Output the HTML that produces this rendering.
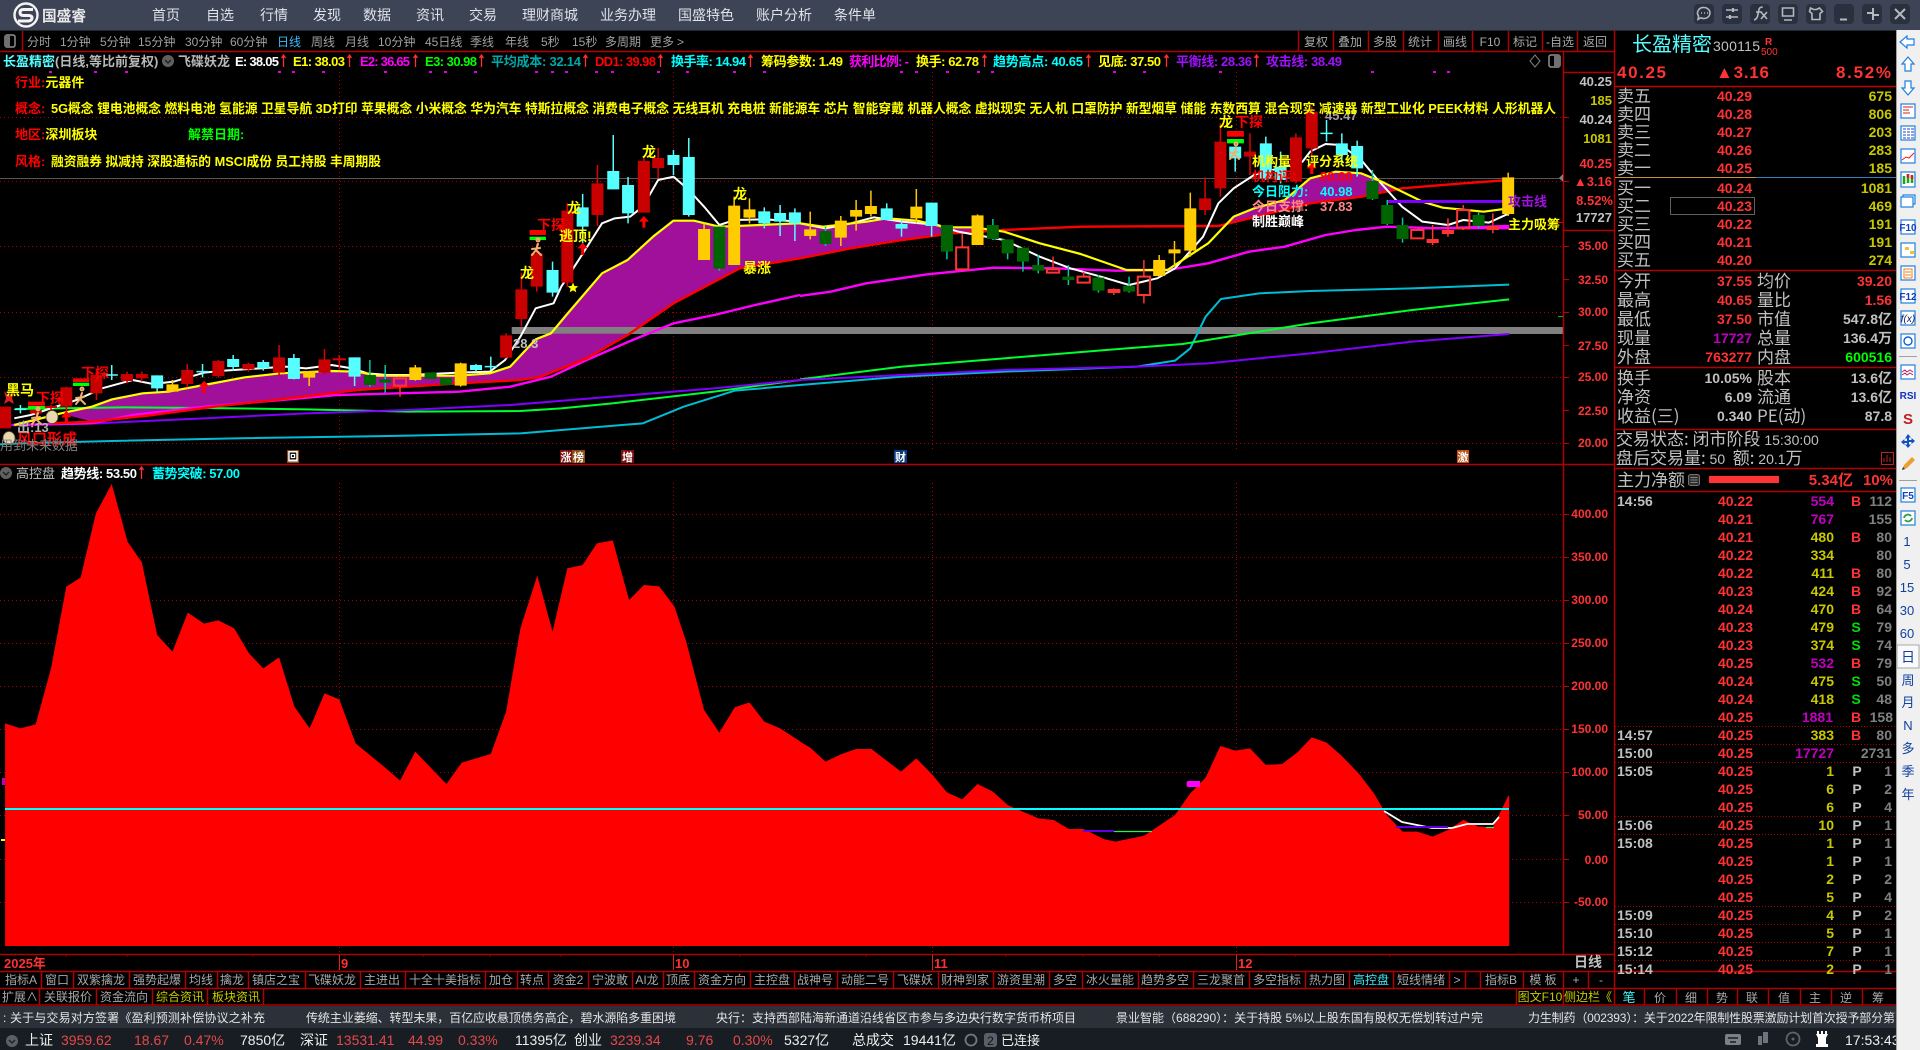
<!DOCTYPE html>
<html lang="zh-CN">
<head>
<meta charset="utf-8">
<title>长盈精密</title>
<style>
html,body{margin:0;padding:0;background:#000;width:1920px;height:1050px;overflow:hidden}
svg{display:block;position:absolute;left:0;top:0}
text{font-family:"Liberation Sans","WenQuanYi Zen Hei","Noto Sans CJK SC",sans-serif;white-space:pre}
.b text,text.b{font-family:"Liberation Sans","Noto Sans CJK SC",sans-serif;font-weight:bold}
.ns{vector-effect:non-scaling-stroke;fill:none}
.ns path,.ns rect,.ns polyline{vector-effect:non-scaling-stroke}
.dot{stroke:#a80000;stroke-width:1;stroke-dasharray:1 3;fill:none}
.ln{stroke:#b00000;stroke-width:1.5;fill:none}
.tb text{font-size:12px;fill:#a8a8a8;text-anchor:middle}
.ax text{font-size:12px;font-weight:bold;fill:#ff3333;text-anchor:end}
.lb text{font-size:17px;fill:#c0c0c0;font-family:"Noto Sans CJK SC",sans-serif}
.rv text{font-size:14px;text-anchor:end;font-weight:bold}
.tk text{font-size:14px;font-weight:bold}
.yl{fill:#c8c800}.rd{fill:#ff3333}.gy{fill:#c0c0c0}.mg{fill:#c000c0}.dg{fill:#808080}.gn{fill:#00e000}
.sd text{font-size:13px;fill:#1040a0;text-anchor:middle}
</style>
</head>
<body>
<svg xmlns="http://www.w3.org/2000/svg" width="1920" height="1050" viewBox="0 0 1920 1050">
<rect width="1920" height="1050" fill="#000"/>

<!-- title bar -->
<rect width="1920" height="30" fill="#3d4456"/>
<circle cx="26" cy="15" r="11.500" fill="none" stroke="#f4f4f4" stroke-width="2.400"/>
<path d="M33 9.500H23.500Q20 9.500 20 12.500T23.500 15.500H28.500Q32 15.500 32 18T28.500 21H18" fill="none" stroke="#f4f4f4" stroke-width="3"/>
<text x="42" y="21" font-size="15" font-weight="bold" fill="#e8e8e8" textLength="44" lengthAdjust="spacingAndGlyphs" font-family="Noto Sans CJK SC">国盛睿</text>
<g font-size="14" fill="#dfe3ea">
<text x="152" y="20">首页</text><text x="206" y="20">自选</text><text x="260" y="20">行情</text><text x="313" y="20">发现</text><text x="363" y="20">数据</text><text x="416" y="20">资讯</text><text x="469" y="20">交易</text><text x="522" y="20">理财商城</text><text x="600" y="20">业务办理</text><text x="678" y="20">国盛特色</text><text x="756" y="20">账户分析</text><text x="834" y="20">条件单</text>
</g>
<!-- window buttons -->
<g fill="#2a303d">
<rect x="1694" y="4" width="20" height="20" rx="4"/><rect x="1722" y="4" width="20" height="20" rx="4"/><rect x="1750" y="4" width="20" height="20" rx="4"/><rect x="1778" y="4" width="20" height="20" rx="4"/><rect x="1806" y="4" width="20" height="20" rx="4"/><rect x="1834" y="4" width="20" height="20" rx="4"/><rect x="1862" y="4" width="20" height="20" rx="4"/><rect x="1890" y="4" width="20" height="20" rx="4"/>
</g>
<g fill="none" stroke="#b4b8c0" stroke-width="1.600">
<path d="M1704 7.500a6 5.500 0 1 1-3 10.300l-3 1.500.6-3.200a6 5.500 0 0 1 5.400-8.600z"/><path d="M1701 13h1M1704 13h1M1707 13h1"/>
<path d="M1726 10h12M1726 17h12"/><path d="M1733 8v4M1730 15v4" stroke-width="2.200"/>
<path d="M1754 20q3.500-1 4-6l.8-4q.5-3 4-3M1756 12h6M1761 12l6 7M1767 12l-6 7"/>
<path d="M1782.500 8h11v8h-11zM1784 20h8"/>
<path d="M1810.500 8l3 1.500h3l3-1.500 3 3.500-2.500 2v6h-8v-6l-2.500-2z"/>
<path d="M1840 19.500h7" stroke-width="2"/>
<path d="M1873 8v5h-6M1873 20v-5h6" stroke-width="2"/>
<path d="M1895 9l10 10M1905 9l-10 10" stroke-width="2"/>
</g>
<rect x="0" y="30" width="1896" height="1" fill="#23272f"/>

<!-- top toolbar -->
<rect x="5" y="35" width="10" height="12" rx="2" fill="none" stroke="#909090" stroke-width="1.500"/>
<rect x="5" y="35" width="5" height="12" fill="#707070"/>
<path d="M22.500 31V51" class="ln"/>
<g font-size="12" fill="#a0a0a0">
<text x="27" y="46">分时</text><text x="60" y="46">1分钟</text><text x="100" y="46">5分钟</text><text x="138" y="46">15分钟</text><text x="185" y="46">30分钟</text><text x="230" y="46">60分钟</text><text x="277" y="46" style="fill:#40b8f8">日线</text><text x="311" y="46">周线</text><text x="345" y="46">月线</text><text x="378" y="46">10分钟</text><text x="425" y="46">45日线</text><text x="470" y="46">季线</text><text x="505" y="46">年线</text><text x="541" y="46">5秒</text><text x="572" y="46">15秒</text><text x="605" y="46">多周期</text><text x="650" y="46">更多</text><text x="677" y="46">&gt;</text>
</g>
<g class="tb">
<text x="1316" y="46">复权</text><text x="1350" y="46">叠加</text><text x="1385" y="46">多股</text><text x="1420" y="46">统计</text><text x="1455" y="46">画线</text><text x="1490" y="46">F10</text><text x="1525" y="46">标记</text><text x="1560" y="46">-自选</text><text x="1595" y="46">返回</text>
</g>
<path d="M1298.500 31V51M1333.500 31V51M1368.500 31V51M1403.500 31V51M1438.500 31V51M1472.500 31V51M1508.500 31V51M1542.500 31V51M1577.500 31V51" class="ln"/>
<path d="M0 51.500H1614" class="ln"/>

<!-- price chart grid -->
<g class="dot">
<path d="M0 117.500H1563M0 181.500H1563M0 246.500H1563M0 312.500H1563M0 377.500H1563M0 443.500H1563"/>
<path d="M339.500 72V450M673.500 72V450M932.500 72V450M1236.500 72V450"/>
</g>
<path d="M0 178.500H1563" stroke="#555" stroke-width="1"/>
<rect x="512" y="327" width="1051" height="7" fill="#808080"/>

<!-- group A: left half of chart -->
<g transform="translate(0,180) scale(.5102,.33333)">
<polygon fill="#a0109a" points="120,700 180,680 220,658 280,640 330,635 400,615 480,592 550,580 650,573 700,575 740,587 900,587 960,580 1000,560 1050,478 1080,460 1110,405 1180,280 1230,240 1280,170 1320,122 1360,122 1410,140 1568,130 1568,235 1450,265 1320,370 1230,465 1150,535 1060,590 1020,600 900,610 700,630 550,658 420,680 300,705 180,725"/>
<rect x="1003" y="441" width="565" height="20" fill="#808080"/>
<g fill="none" stroke-linejoin="round">
<polyline class="ns" stroke="#00bcd4" stroke-width="2" points="0,793 40,790 220,783 460,775 800,767 1020,760 1260,730 1340,680 1440,632 1568,615"/>
<polyline class="ns" stroke="#00ff30" stroke-width="2" points="30,687 240,682 400,684 600,688 800,695 1020,693 1100,685 1200,670 1400,635 1568,600"/>
<polyline class="ns" stroke="#8000ff" stroke-width="2" points="20,735 190,730 400,715 600,700 800,690 1000,675 1200,650 1400,625 1568,600"/>
<polyline class="ns" stroke="#ff00ff" stroke-width="2.400" points="25,735 180,730 260,705 400,680 550,660 660,645 900,635 1000,620 1080,590 1150,540 1240,480 1320,430 1400,405 1480,375 1568,345"/>
<polyline class="ns" stroke="#ff0000" stroke-width="2.400" points="100,730 180,725 300,705 420,680 550,658 700,630 900,610 1020,600 1060,590 1150,535 1230,465 1320,370 1450,265 1568,235"/>
<polyline class="ns" stroke="#ffffff" stroke-width="2" points="28,715 60,705 150,660 200,625 260,600 300,612 340,605 400,578 440,572 510,565 560,560 600,565 650,555 690,565 720,580 760,585 800,585 900,578 960,575 990,540 1020,470 1050,385 1085,370 1100,320 1130,250 1180,130 1205,115 1235,110 1260,80 1290,0 1320,-10 1350,30 1380,80 1410,135 1440,120 1500,118 1568,125"/>
<polyline class="ns" stroke="#ffff00" stroke-width="2.200" points="28,735 120,700 180,680 220,658 280,640 330,635 400,615 480,592 550,580 650,573 700,575 740,587 900,587 960,580 1000,560 1050,478 1080,460 1110,405 1180,280 1230,240 1280,170 1320,122 1360,122 1410,140 1568,130"/>
</g>
<!-- candles -->
<path class="ns" stroke="#e00000" stroke-width="1.500" d="M10 680V745M70 680V705M100 675V690M130 620V700M189 570V660M249 575V610M278 575V605M367 552V622M428 540V593M487 548V575M547 495V590M636 507V585M665 525V568M992 460V535M1022 280V440M1052 190V335M1112 70V320M1171 -45V138M1262 -70V98M1290 -96V-6"/>
<path class="ns" stroke="#c80000" stroke-width="12" d="M10 680V745M70 690V700M100 678V684M130 622V680M189 585V640M249 582V603M278 582V595M367 570V612M428 543V588M487 552V568M547 532V578M636 538V578M992 466V533M1022 328V417M1052 220V320M1112 92V308M1171 10V105M1262 -57V98M1290 -66V-36"/>
<path class="ns" stroke="#e00000" stroke-width="2" d="M652 538H678"/>
<path class="ns" stroke="#55ffff" stroke-width="1.500" d="M40 675V700M219 555V600M308 586V635M397 552V592M457 525V572M516 540V572M576 522V598M695 532V618M933 552V575M962 530V572M1083 245V350M1142 42V225M1202 -135V28M1231 -9V130M1320 -90V-15M1350 -126V110M1498 82V145M1529 75V168M1558 85V183M28 688H52M207 585H231M385 575H409M950 560H975"/>
<path class="ns" stroke="#55ffff" stroke-width="12" d="M308 586V625M457 537V561M516 546V565M576 534V597M695 532V590M933 555V570M1083 270V338M1142 82V140M1202 -27V28M1231 15V100M1320 -75V-45M1350 -69V105M1498 94V130M1529 99V125M1558 97V130"/>
<path class="ns" stroke="#ffc800" stroke-width="1.500" d="M338 600V635M606 573V618M814 555V602M903 548V620M1380 128V240M1439 50V255M1469 55V130"/>
<path class="ns" stroke="#ffcc00" stroke-width="12" d="M338 613V635M606 573V593M814 562V600M903 550V617M1380 147V240M1439 77V255M1469 88V113"/>
<path class="ns" stroke="#00c8a0" stroke-width="1.500" d="M725 540V620M755 555V638M1410 140V272"/>
<path class="ns" stroke="#006400" stroke-width="12" d="M725 585V615M755 598V608M844 577V597M874 594V615M1410 140V266"/>
<rect class="ns" x="772" y="595" width="24" height="22" fill="none" stroke="#ff3333" stroke-width="2"/>
<path class="ns" stroke="#ff3333" stroke-width="1.500" d="M784 617V650"/>
<!-- marker bars -->
<rect x="1038" y="150" width="32" height="15" fill="#ff0000"/><rect x="1038" y="170" width="32" height="10" fill="#00ff00"/>
<rect x="55" y="665" width="33" height="12" fill="#ff0000"/><rect x="55" y="678" width="33" height="10" fill="#00ff00"/>
<rect x="143" y="595" width="32" height="11" fill="#ff0000"/><rect x="143" y="608" width="32" height="10" fill="#00ff00"/>
<!-- arrows -->
<g fill="#ff0000">
<path d="M120 712L130 692L140 712H133V730H127V712zM390 620L400 602L410 620H403V640H397V620zM1132 205L1142 188L1152 205H1145V225H1139V205zM1252 125L1262 108L1272 125H1265V143H1259V125z"/>
</g>
</g>

<!-- group B: right half of chart -->
<g transform="translate(800,100) scale(.5102,.33333)">
<polygon fill="#a0109a" points="0,370 45,380 130,365 170,355 230,362 285,382 340,382 400,395 400,392 300,400 200,420 100,445 0,475"/>
<polygon fill="#a0109a" points="830,375 850,350 890,325 950,300 1000,235 1050,215 1100,220 1140,245 1165,265 1100,290 1000,310"/>
<g fill="none" stroke-linejoin="round">
<polyline class="ns" stroke="#00bcd4" stroke-width="2" points="0,855 200,830 400,815 660,800 735,782 765,745 795,650 825,597 900,580 1000,573 1200,565 1390,554"/>
<polyline class="ns" stroke="#00ff30" stroke-width="2" points="0,838 200,800 400,775 600,750 750,732 900,695 1000,670 1200,630 1390,598"/>
<polyline class="ns" stroke="#8000ff" stroke-width="2" points="0,840 200,825 400,810 660,800 800,790 1000,760 1200,725 1390,702"/>
<polyline class="ns" stroke="#ff00ff" stroke-width="2.400" points="0,588 60,575 130,550 250,523 380,503 500,505 620,512 720,510 800,490 880,455 950,440 1030,405 1090,390 1150,380 1250,385 1390,378"/>
<polyline class="ns" stroke="#ff0000" stroke-width="2.400" points="0,475 100,445 200,420 300,400 400,390 550,380 820,378 1000,310 1100,290 1180,265 1300,250 1390,240"/>
<polyline class="ns" stroke="#ffffff" stroke-width="2" points="0,370 50,385 100,370 145,352 200,365 270,375 310,395 400,420 470,470 530,505 590,530 645,555 700,535 735,505 790,410 820,310 850,265 890,225 985,185 1000,155 1030,132 1060,135 1100,180 1130,235 1180,320 1220,365 1270,375 1300,360 1350,368 1390,340"/>
<polyline class="ns" stroke="#ffff00" stroke-width="2.200" points="0,370 45,380 130,365 170,355 230,362 285,382 340,382 400,395 470,430 550,462 640,510 720,510 800,430 850,350 890,325 950,300 1000,235 1050,215 1100,220 1140,245 1220,305 1260,323 1340,335 1390,325"/>
<rect x="1150" y="300" width="240" height="9" fill="#8000ff"/>
<rect x="1210" y="381" width="180" height="7" fill="#ff00ff"/>
</g>
<path class="ns" stroke="#ffc800" stroke-width="1.500" d="M20 335V418M80 348V438M110 300V392M139 272V350M228 267V370M348 343V435M704 465V530M734 423V500M765 278V470M1388 218V348"/>
<path class="ns" stroke="#ffcc00" stroke-width="12" d="M20 388V408M80 362V413M110 330V350M139 318V342M228 320V355M348 346V435M704 480V528M734 448V460M765 325V452M1388 232V342"/>
<path class="ns" stroke="#55ffff" stroke-width="1.500" d="M170 310V360M199 360V410M258 308V410M853 140V215M913 110V240M942 155V250M1032 60V125M1062 100V190M1092 122V230M1020 100H1044"/>
<path class="ns" stroke="#55ffff" stroke-width="12" d="M170 325V360M199 372V386M258 308V378M853 140V175M913 130V235M942 200V240M1062 130V165M1092 138V205"/>
<path class="ns" stroke="#00c8a0" stroke-width="1.500" d="M50 380V438M288 375V478M378 357V420M407 418V478M437 443V515M467 465V520M526 495V555M585 525V578M645 530V578M1122 210V300M1151 300V375M1181 353V428M1330 338V385"/>
<path class="ns" stroke="#006400" stroke-width="12" d="M50 393V432M288 375V455M378 375V417M407 418V460M437 443V485M467 495V512M526 530V540M585 533V572M645 558V575M1122 243V297M1151 315V372M1181 375V417M1330 345V378"/>
<path class="ns" stroke="#e00000" stroke-width="1.500" d="M794 232V345M824 70V290M882 100V225M972 100V250M1003 20V170"/>
<path class="ns" stroke="#c80000" stroke-width="12" d="M794 295V330M824 125V265M882 155V170M972 112V245M1003 35V145"/>
<path class="ns" stroke="#ff3333" stroke-width="1.500" d="M615 565V585M1240 375V435M1270 355V410M1358 340V400M318 400V442M496 470V508M556 515V530M674 480V530M674 585V610M1300 315V330M1300 385V390"/>
<path class="ns" stroke="#ff3333" stroke-width="4" d="M603 573H628M1228 423H1252M1258 396H1282M1346 384H1370"/>
<g class="ns" stroke="#ff3333" stroke-width="2" fill="none">
<rect x="306" y="442" width="24" height="66"/><rect x="484" y="508" width="24" height="10"/><rect x="544" y="530" width="24" height="18"/><rect x="662" y="530" width="24" height="55"/><rect x="1198" y="390" width="24" height="25"/><rect x="1288" y="330" width="24" height="55"/>
</g>
<rect x="837" y="93" width="33" height="17" fill="#ff0000"/><rect x="837" y="117" width="33" height="13" fill="#00ff00"/>
<path fill="#ff0000" d="M993 205L1003 186L1013 205H1006V222H1000V205z"/>
</g>

<!-- small icons on chart -->
<g fill="none" stroke="#f0b070" stroke-width="2" stroke-linecap="round">
<path d="M82 393l-2 6-4 5M80 399l5 5M76 398l8-1"/><circle cx="82" cy="389" r="1.500"/>
<path d="M38 413l-2 6-4 5M36 419l5 5M32 418l8-1"/><circle cx="38" cy="409" r="1.500"/>
<path d="M538 244l-2 6-4 5M536 250l5 5M532 249l8-1"/><circle cx="538" cy="240" r="1.500"/>
<path d="M1236 148l-2 6-4 5M1234 154l5 5M1230 153l8-1"/><circle cx="1236" cy="144" r="1.500"/>
</g>
<g fill="#e8d8b0" stroke="#6a5028" stroke-width=".8">
<ellipse cx="52" cy="417" rx="6" ry="6.500"/><ellipse cx="9" cy="438" rx="6" ry="6.500"/>
</g>
<path d="M4 391l5 5 5-5-2 7 2 6-5-3-5 3 2-6z" fill="#e02020"/>
<path d="M573 282.500l1.500 3.500 3.700.3-2.800 2.400.9 3.600-3.300-1.900-3.300 1.900.9-3.600-2.800-2.400 3.700-.3z" fill="#ffff00"/>

<!-- chart labels -->
<g class="b" font-size="14" fill="#ffff00">
<text x="642" y="157">龙</text><text x="567" y="213">龙</text><text x="733" y="199">龙</text><text x="520" y="278">龙</text><text x="1219" y="127">龙</text>
<text x="559" y="241">逃顶!</text><text x="6" y="395">黑马</text><text x="743" y="273">暴涨</text>
</g>
<g class="b" font-size="14" fill="#ff0000">
<text x="537" y="230">下探</text><text x="36" y="403">下探</text><text x="81" y="378">下探</text><text x="1235" y="127">下探</text><text x="17" y="444" font-size="15">风口形成</text>
</g>
<text x="17" y="432" font-size="13" fill="#b0b0b0" class="b">出:13</text>
<text x="0" y="450" font-size="13" fill="#808080">用到未来数据</text>
<text x="513" y="348" font-size="13" fill="#c0c0c0" class="b">28.3</text>
<text x="1325" y="120" font-size="13" fill="#a0a0a0" class="b">45.47</text>
<g font-size="13" class="b">
<text x="1252" y="166" fill="#ffff00">机构量</text><text x="1306" y="166" fill="#ffff00">评分系统</text>
<text x="1252" y="181" fill="#ff0000">机构评：</text><text x="1320" y="181" fill="#ff0000">80.00</text>
<text x="1252" y="196" fill="#00ffff">今日阻力:</text><text x="1320" y="196" fill="#00ffff">40.98</text>
<text x="1252" y="211" fill="#ff8888">今日支撑:</text><text x="1320" y="211" fill="#ff8888">37.83</text>
<text x="1252" y="226" fill="#ffffff">制胜巅峰</text>
<text x="1508" y="206" fill="#a010e0">攻击线</text><text x="1508" y="229" fill="#ffff00">主力吸筹</text>
</g>
<g font-size="11" font-weight="bold" text-anchor="middle">
<rect x="287" y="450" width="12" height="13" fill="#8a4a10"/><rect x="289" y="452" width="8" height="9" fill="#000" stroke="#fff"/>
<rect x="560" y="450" width="12" height="13" fill="#7a1010"/><rect x="572" y="450" width="13" height="13" fill="#8a4a10"/>
<rect x="621" y="450" width="13" height="13" fill="#7a1010"/><rect x="894" y="450" width="13" height="13" fill="#0a3a80"/><rect x="1457" y="450" width="12" height="13" fill="#c05010"/>
<text x="293" y="460" fill="#fff">回</text><text x="566" y="461" fill="#fff">涨</text><text x="578.500" y="461" fill="#fff">榜</text><text x="627.500" y="461" fill="#fff">增</text><text x="900.500" y="461" fill="#fff">财</text><text x="1463" y="461" fill="#fff">激</text>
</g>

<!-- info row -->
<g class="b" font-size="13">
<text x="3" y="66" fill="#55ffff">长盈精密<tspan fill="#b8b8b8">(日线,等比前复权)</tspan></text>
<text x="178" y="66" fill="#b8b8b8">飞碟妖龙</text>
<text x="235" y="66" fill="#fff" textLength="44">E: 38.05</text>
<text x="293" y="66" fill="#ffff00" textLength="52">E1: 38.03</text>
<text x="360" y="66" fill="#ff00ff" textLength="50">E2: 36.65</text>
<text x="425" y="66" fill="#00ff00" textLength="52">E3: 30.98</text>
<text x="491" y="66" fill="#00a8a8" textLength="90">平均成本: 32.14</text>
<text x="595" y="66" fill="#ff0000" textLength="61">DD1: 39.98</text>
<text x="671" y="66" fill="#00ffff" textLength="75">换手率: 14.94</text>
<text x="761" y="66" fill="#ffff00" textLength="82">筹码参数: 1.49</text>
<text x="849" y="66" fill="#ff00ff" textLength="60">获利比例: -</text>
<text x="916" y="66" fill="#ffff00" textLength="63">换手: 62.78</text>
<text x="993" y="66" fill="#00ffff" textLength="90">趋势高点: 40.65</text>
<text x="1098" y="66" fill="#ffff00" textLength="63">见底: 37.50</text>
<text x="1176" y="66" fill="#a010ff" textLength="76">平衡线: 28.36</text>
<text x="1266" y="66" fill="#a010ff" textLength="76">攻击线: 38.49</text>
</g>
<circle cx="168" cy="61" r="6" fill="#606060"/><path d="M165 60l3 3 3-3" stroke="#222" stroke-width="1.500" fill="none"/>
<g fill="none" stroke="#ff3030" stroke-width="1.300">
<path d="M283.500 67V55M281.500 58l2-3 2 3M349.500 67V55M347.500 58l2-3 2 3M415.500 67V55M413.500 58l2-3 2 3M481.500 67V55M479.500 58l2-3 2 3M585.500 67V55M583.500 58l2-3 2 3M660.500 67V55M658.500 58l2-3 2 3M750.500 67V55M748.500 58l2-3 2 3M984.500 67V55M982.500 58l2-3 2 3M1088.500 67V55M1086.500 58l2-3 2 3M1166.500 67V55M1164.500 58l2-3 2 3M1256.500 67V55M1254.500 58l2-3 2 3"/>
</g>
<g fill="#e000e0">
<path d="M49 71h3v2h-3zM94 71h3v2h-3zM125 71h3v2h-3zM278 71h3v2h-3zM292 71h3v2h-3zM322 71h3v2h-3zM384 71h3v2h-3zM429 71h3v2h-3zM444 71h3v2h-3zM474 71h3v2h-3zM535 71h3v2h-3zM551 71h3v2h-3zM565 71h3v2h-3zM595 71h3v2h-3zM611 71h3v2h-3zM657 71h3v2h-3zM686 71h3v2h-3zM733 71h3v2h-3zM763 71h3v2h-3zM900 71h3v2h-3zM915 71h3v2h-3zM946 71h3v2h-3zM977 71h3v2h-3zM991 71h3v2h-3zM1113 71h3v2h-3zM1143 71h3v2h-3zM1219 71h3v2h-3zM1371 71h3v2h-3zM1433 71h3v2h-3zM1447 71h3v2h-3z"/>
</g>
<path d="M1535 55l5 6-5 6-5-6z" fill="none" stroke="#808080"/>
<rect x="1549" y="55" width="11" height="12" rx="2" fill="none" stroke="#909090" stroke-width="1.500"/><rect x="1554" y="55" width="6" height="12" fill="#707070"/>

<!-- stock info overlay -->
<g class="b" font-size="13">
<text x="15" y="87" fill="#ff0000">行业:<tspan fill="#ffff00">元器件</tspan></text>
<text x="15" y="113" fill="#ff0000">概念:</text>
<text x="51" y="113" fill="#ffff00" textLength="1505" lengthAdjust="spacingAndGlyphs">5G概念 锂电池概念 燃料电池 氢能源 卫星导航 3D打印 苹果概念 小米概念 华为汽车 特斯拉概念 消费电子概念 无线耳机 充电桩 新能源车 芯片 智能穿戴 机器人概念 虚拟现实 无人机 口罩防护 新型烟草 储能 东数西算 混合现实 减速器 新型工业化 PEEK材料 人形机器人</text>
<text x="15" y="139" fill="#ff0000">地区:<tspan fill="#ffff00">深圳板块</tspan></text>
<text x="188" y="139" fill="#00ff00">解禁日期:</text>
<text x="15" y="166" fill="#ff0000">风格:</text>
<text x="51" y="166" fill="#ffff00" textLength="330" lengthAdjust="spacingAndGlyphs">融资融券 拟减持 深股通标的 MSCI成份 员工持股 丰周期股</text>
</g>

<!-- right axis -->
<path d="M1563.500 51V954M1614.500 30V1005" class="ln" stroke-width="2"/>
<path d="M1563 72.500H1614M1563 230.500H1614" class="ln"/>
<path d="M0 464.500H1614" class="ln"/>
<g font-size="13" font-weight="bold" text-anchor="end">
<text x="1612" y="86" fill="#c0c0c0">40.25</text><text x="1612" y="105" fill="#c8c800">185</text><text x="1612" y="124" fill="#c0c0c0">40.24</text><text x="1612" y="143" fill="#c8c800">1081</text><text x="1612" y="168" fill="#ff3333">40.25</text><text x="1612" y="186" fill="#ff3333">▲3.16</text><text x="1613" y="205" fill="#ff3333">8.52%</text><text x="1612" y="222" fill="#c0c0c0">17727</text>
</g>
<g class="ax">
<text x="1608" y="250">35.00</text><text x="1608" y="284">32.50</text><text x="1608" y="316">30.00</text><text x="1608" y="350">27.50</text><text x="1608" y="381">25.00</text><text x="1608" y="415">22.50</text><text x="1608" y="447">20.00</text>
<text x="1608" y="518">400.00</text><text x="1608" y="561">350.00</text><text x="1608" y="604">300.00</text><text x="1608" y="647">250.00</text><text x="1608" y="690">200.00</text><text x="1608" y="733">150.00</text><text x="1608" y="776">100.00</text><text x="1608" y="819">50.00</text><text x="1608" y="864">0.00</text><text x="1608" y="906">-50.00</text>
</g>
<path d="M1563 117.500h6M1563 181.500h6M1563 246.500h6M1563 279.500h6M1563 312.500h6M1563 345.500h6M1563 377.500h6M1563 410.500h6M1563 443.500h6M1563 514.500h6M1563 557.500h6M1563 600.500h6M1563 643.500h6M1563 686.500h6M1563 729.500h6M1563 772.500h6M1563 815.500h6M1563 859.500h6M1563 902.500h6" stroke="#c00000"/>
<path d="M1559 178l4-4v8z" fill="#808080"/><path d="M1558 316.500h5" stroke="#00c000"/>
<path d="M1558 222.500h5" stroke="#e00000"/>

<!-- lower panel -->
<g class="dot">
<path d="M0 514.500H1563M0 557.500H1563M0 600.500H1563M0 643.500H1563M0 686.500H1563M0 729.500H1563M0 772.500H1563M0 815.500H1563M0 859.500H1563M0 902.500H1563"/>
<path d="M339.500 483V954M673.500 483V954M932.500 483V954M1236.500 483V954"/>
</g>
<g transform="translate(0,465) scale(.5102,.33333)">
<polygon fill="#ff0000" points="10,1443 10,775 40,790 70,778 100,610 130,365 158,338 188,145 219,57 250,230 278,292 308,510 338,560 368,443 400,476 428,466 459,490 488,565 516,610 547,577 577,725 607,790 636,685 665,703 697,835 755,908 784,947 814,860 875,957 905,893 962,867 992,740 1020,490 1053,332 1083,500 1112,310 1142,300 1170,235 1201,226 1233,405 1262,360 1292,364 1322,425 1345,530 1380,735 1410,803 1440,727 1469,712 1498,770 1529,790 1569,830 1569,1443"/>
</g>
<g transform="translate(800,465) scale(.5102,.33333)">
<polygon fill="#ff0000" points="0,1443 0,830 20,848 50,890 80,868 110,852 140,852 198,920 228,880 260,930 288,982 318,1003 348,957 378,980 407,1020 467,1060 497,1065 527,1092 556,1092 595,1122 618,1130 675,1112 735,1050 765,985 795,938 824,843 853,857 882,850 913,900 945,897 975,862 1003,817 1032,833 1060,870 1095,925 1125,985 1150,1050 1181,1100 1210,1100 1240,1115 1270,1095 1300,1065 1330,1085 1358,1087 1388,993 1390,993 1390,1443"/>
</g>
<rect x="5" y="808" width="1504" height="2" fill="#00ffff"/>
<path d="M1188 787c-2 0-2-6 0-6h12v6z" fill="#ff00ff"/>
<circle cx="6" cy="473" r="6" fill="#606060"/><path d="M3 472l3 3 3-3" stroke="#222" stroke-width="1.500" fill="none"/>
<g class="b" font-size="13">
<text x="16" y="478" fill="#c0c0c0" style="font-weight:normal">高控盘</text>
<text x="61" y="478" fill="#fff" textLength="76">趋势线: 53.50</text>
<text x="152" y="478" fill="#00ffff" textLength="88">蓄势突破: 57.00</text>
</g>
<path d="M141.500 479V467M139.500 470l2-3 2 3" stroke="#ff3030" stroke-width="1.300" fill="none"/>
<path d="M1384 811l18 11 30 6 20 0 15-4 26 0 6-7" stroke="#fff" stroke-width="1.800" fill="none"/>
<path d="M1396 827h52" stroke="#6000e0" stroke-width="2"/><path d="M1083 831h31" stroke="#6000e0" stroke-width="2"/><path d="M1114 831.500h38" stroke="#30f050" stroke-width="1.200"/><path d="M1486 827.500h8" stroke="#30f050" stroke-width="1.200"/>
<rect x="1" y="839" width="4" height="2" fill="#ffff00"/><rect x="2" y="778" width="3" height="7" fill="#c000c0"/>

<!-- date row -->
<path d="M0 954.500H1614M0 971.500H1896" class="ln"/>
<g fill="#ff3030" font-weight="bold" font-size="13">
<text x="4" y="968" class="b">2025年</text><text x="341" y="968">9</text><text x="675" y="968">10</text><text x="934" y="968">11</text><text x="1238" y="968">12</text>
</g>
<path d="M339.500 955V970M673.500 955V970M932.500 955V970M1236.500 955V970" stroke="#e02020"/>
<path d="M66 955v2M127 955v2M253 955v2M423 955v2M490 955v2M561 955v2M740 955v2M866 955v2M1006 955v2M1083 955v2M1159 955v2M1295 955v2M1390 955v2" stroke="#900000"/>
<text x="1588" y="967" font-size="14" fill="#c0c0c0" text-anchor="middle" font-weight="bold" style="font-family:'Noto Sans CJK SC',sans-serif">日线</text>

<!-- tab rows -->
<path d="M0 988.500H1896M0 1005H1896" class="ln"/>
<path d="M41.500 971V988M73.500 971V988M129.500 971V988M185.500 971V988M217.500 971V988M248.500 971V988M305.500 971V988M360.500 971V988M405.500 971V988M485.500 971V988M517.500 971V988M548.500 971V988M588.500 971V988M632.500 971V988M663.500 971V988M694.500 971V988M750.500 971V988M794.500 971V988M837.500 971V988M893.500 971V988M938.500 971V988M993.500 971V988M1049.500 971V988M1082.500 971V988M1138.500 971V988M1193.500 971V988M1249.500 971V988M1305.500 971V988M1349.500 971V988M1393.500 971V988M1449.500 971V988M1465.500 971V988M1480.500 971V988M1523.500 971V988M1563.500 971V988M1588.500 971V988" class="ln" stroke-width="1"/>
<g class="tb">
<text x="21" y="984">指标A</text><text x="57" y="984">窗口</text><text x="101" y="984">双紫擒龙</text><text x="157" y="984">强势起爆</text><text x="201" y="984">均线</text><text x="232" y="984">擒龙</text><text x="276" y="984">镇店之宝</text><text x="332" y="984">飞碟妖龙</text><text x="382" y="984">主进出</text><text x="445" y="984">十全十美指标</text><text x="501" y="984">加仓</text><text x="532" y="984">转点</text><text x="568" y="984">资金2</text><text x="610" y="984">宁波敢</text><text x="647" y="984">AI龙</text><text x="678" y="984">顶底</text><text x="722" y="984">资金方向</text><text x="772" y="984">主控盘</text><text x="815" y="984">战神号</text><text x="865" y="984">动能二号</text><text x="915" y="984">飞碟妖</text><text x="965" y="984">财神到家</text><text x="1021" y="984">游资里潮</text><text x="1065" y="984">多空</text><text x="1110" y="984">冰火量能</text><text x="1165" y="984">趋势多空</text><text x="1221" y="984">三龙聚首</text><text x="1277" y="984">多空指标</text><text x="1327" y="984">热力图</text><text x="1371" y="984" style="fill:#40e8f8">高控盘</text><text x="1421" y="984">短线情绪</text><text x="1457" y="984">&gt;</text><text x="1501" y="984">指标B</text><text x="1543" y="984">模 板</text><text x="1576" y="984">+</text><text x="1601" y="984">-</text>
</g>
<path d="M39.500 988V1005M96.500 988V1005M152.500 988V1005M207.500 988V1005M263.500 988V1005M1516.500 988V1005M1563.500 988V1005" class="ln" stroke-width="1"/>
<g class="tb">
<text x="20" y="1001">扩展∧</text><text x="68" y="1001">关联报价</text><text x="124" y="1001">资金流向</text><text x="180" y="1001" style="fill:#c8c800">综合资讯</text><text x="236" y="1001" style="fill:#c8c800">板块资讯</text><text x="1540" y="1001" style="fill:#c8c800">图文F10</text><text x="1588" y="1001" style="fill:#c8c800">侧边栏《</text>
<text x="1629" y="1002" style="fill:#40f0f0;font-size:13px">笔</text><text x="1660" y="1002">价</text><text x="1691" y="1002">细</text><text x="1722" y="1002">势</text><text x="1752" y="1002">联</text><text x="1784" y="1002">值</text><text x="1815" y="1002">主</text><text x="1846" y="1002">逆</text><text x="1878" y="1002">筹</text>
</g>
<path d="M1644.500 988V1005M1676.500 988V1005M1707.500 988V1005M1737.500 988V1005M1768.500 988V1005M1800.500 988V1005M1831.500 988V1005M1862.500 988V1005" class="ln" stroke-width="1"/>

<!-- ticker -->
<rect y="1006" width="1896" height="22" fill="#2c3039"/>
<g font-size="12" fill="#e4e4e4">
<text x="3" y="1022" textLength="262">: 关于与交易对方签署《盈利预测补偿协议之补充</text>
<text x="306" y="1022" textLength="370">传统主业萎缩、转型未果，百亿应收悬顶债务高企，碧水源陷多重困境</text>
<text x="716" y="1022" textLength="360">央行：支持西部陆海新通道沿线省区市参与多边央行数字货币桥项目</text>
<text x="1116" y="1022" textLength="367">景业智能（688290）：关于持股 5%以上股东国有股权无偿划转过户完</text>
<text x="1528" y="1022" textLength="367">力生制药（002393）：关于2022年限制性股票激励计划首次授予部分第</text>
</g>

<!-- status bar -->
<rect y="1028" width="1896" height="22" fill="#171d23"/>
<circle cx="12" cy="1041" r="6" fill="#58606c"/><path d="M9 1040l3 3 3-3" stroke="#222" fill="none" stroke-width="1.500"/>
<g font-size="14" fill="#e84848">
<text x="25" y="1045" style="fill:#eee">上证</text><text x="61" y="1045">3959.62</text><text x="134" y="1045">18.67</text><text x="184" y="1045">0.47%</text><text x="240" y="1045" style="fill:#eee">7850亿</text>
<text x="300" y="1045" style="fill:#eee">深证</text><text x="336" y="1045">13531.41</text><text x="408" y="1045">44.99</text><text x="458" y="1045">0.33%</text><text x="515" y="1045" style="fill:#eee">11395亿</text>
<text x="574" y="1045" style="fill:#eee">创业</text><text x="610" y="1045">3239.34</text><text x="686" y="1045">9.76</text><text x="733" y="1045">0.30%</text><text x="784" y="1045" style="fill:#eee">5327亿</text>
<text x="852" y="1045" style="fill:#eee">总成交</text><text x="903" y="1045" style="fill:#eee">19441亿</text><text x="1001" y="1045" style="fill:#eee;font-size:13px">已连接</text>
<text x="1845" y="1045" style="fill:#eee">17:53:43</text>
</g>
<circle cx="971" cy="1040" r="5.500" fill="none" stroke="#707880" stroke-width="1.800"/>
<rect x="984" y="1033" width="13" height="14" rx="3" fill="#58606c"/><text x="990.500" y="1045" font-size="12" fill="#111" text-anchor="middle">2</text>
<rect x="1725" y="1034" width="16" height="11" rx="2" fill="#7a8088"/>
<path d="M1728 1038h10M1730 1042h6" stroke="#171d23" stroke-width="1.500"/>
<path d="M1758 1036h4v9h-4zM1763 1032h5v11h-5z" fill="#6c7480"/>
<circle cx="1793" cy="1039" r="6.500" fill="none" stroke="#5c6470" stroke-width="1.800"/><circle cx="1793" cy="1039" r="1.500" fill="#5c6470"/>
<path d="M1817 1031h2v3h2v-3h2v3h2v-3h2v3h1l-2 4v6h2v3h-12v-3h2v-6l-2-4h1z" fill="#fff"/>

<!-- right panel -->
<g font-size="20" fill="#55ffff"><text x="1632" y="51" style="font-family:'Noto Sans CJK SC',sans-serif">长盈精密</text></g>
<text x="1713" y="51" font-size="14" fill="#c0c0c0" textLength="47">300115</text>
<text x="1765" y="45" font-size="10" fill="#ff3333" font-weight="bold">R</text><text x="1761" y="55" font-size="10" fill="#ff3333">500</text>
<g font-size="17" font-weight="bold" fill="#ff3333">
<text x="1617" y="78" textLength="49">40.25</text>
<text x="1716" y="78" textLength="53">▲3.16</text>
<text x="1836" y="78" textLength="55">8.52%</text>
</g>
<path d="M1615 86.500H1896" stroke="#c00000" stroke-width="1.500"/>
<path d="M1615 177.500H1756" stroke="#d09030"/><path d="M1756 177.500H1896" stroke="#3080c0"/>
<path d="M1615 270.500H1896M1615 367.500H1896M1615 429.500H1896M1615 468.500H1896M1615 491.500H1896" class="ln"/>
<g class="lb">
<text x="1617" y="102">卖五</text><text x="1617" y="120">卖四</text><text x="1617" y="138">卖三</text><text x="1617" y="156">卖二</text><text x="1617" y="174">卖一</text>
<text x="1617" y="194">买一</text><text x="1617" y="212">买二</text><text x="1617" y="230">买三</text><text x="1617" y="248">买四</text><text x="1617" y="266">买五</text>
<text x="1617" y="287">今开</text><text x="1617" y="306">最高</text><text x="1617" y="325">最低</text><text x="1617" y="344">现量</text><text x="1617" y="363">外盘</text>
<text x="1617" y="384">换手</text><text x="1617" y="403">净资</text><text x="1617" y="422">收益(三)</text>
<text x="1757" y="287">均价</text><text x="1757" y="306">量比</text><text x="1757" y="325">市值</text><text x="1757" y="344">总量</text><text x="1757" y="363">内盘</text>
<text x="1757" y="384">股本</text><text x="1757" y="403">流通</text><text x="1757" y="422">PE(动)</text>
<text x="1616" y="445">交易状态: 闭市阶段 <tspan font-size="14" font-family="Liberation Sans">15:30:00</tspan></text>
<text x="1616" y="464">盘后交易量: <tspan font-size="14" font-family="Liberation Sans">50</tspan>  额: <tspan font-size="14" font-family="Liberation Sans">20.1</tspan>万</text>
<text x="1617" y="486">主力净额</text>
</g>
<g class="rv">
<text x="1752" y="101" class="rd">40.29</text><text x="1752" y="119" class="rd">40.28</text><text x="1752" y="137" class="rd">40.27</text><text x="1752" y="155" class="rd">40.26</text><text x="1752" y="173" class="rd">40.25</text>
<text x="1752" y="193" class="rd">40.24</text><text x="1752" y="211" class="rd">40.23</text><text x="1752" y="229" class="rd">40.22</text><text x="1752" y="247" class="rd">40.21</text><text x="1752" y="265" class="rd">40.20</text>
<text x="1892" y="101" class="yl">675</text><text x="1892" y="119" class="yl">806</text><text x="1892" y="137" class="yl">203</text><text x="1892" y="155" class="yl">283</text><text x="1892" y="173" class="yl">185</text>
<text x="1892" y="193" class="yl">1081</text><text x="1892" y="211" class="yl">469</text><text x="1892" y="229" class="yl">191</text><text x="1892" y="247" class="yl">191</text><text x="1892" y="265" class="yl">274</text>
<text x="1752" y="286" class="rd">37.55</text><text x="1752" y="305" class="rd">40.65</text><text x="1752" y="324" class="rd">37.50</text><text x="1752" y="343" class="mg">17727</text><text x="1752" y="362" class="rd">763277</text>
<text x="1752" y="383" class="gy">10.05%</text><text x="1752" y="402" class="gy">6.09</text><text x="1752" y="421" class="gy">0.340</text>
<text x="1892" y="286" class="rd">39.20</text><text x="1892" y="305" class="rd">1.56</text><text x="1892" y="324" class="gy">547.8亿</text><text x="1892" y="343" class="gy">136.4万</text><text x="1892" y="362" style="fill:#00ff00">600516</text>
<text x="1892" y="383" class="gy">13.6亿</text><text x="1892" y="402" class="gy">13.6亿</text><text x="1892" y="421" class="gy">87.8</text>
<text x="1853" y="485" class="rd" style="font-size:15px">5.34亿</text><text x="1893" y="485" class="rd" style="font-size:15px">10%</text>
</g>
<rect x="1670.500" y="197.500" width="84" height="17" fill="none" stroke="#606060"/>
<rect x="1881.500" y="452.500" width="12" height="12" fill="none" stroke="#c02020"/><path d="M1884 462v-4M1887 462v-7M1890 462v-5" stroke="#c02020"/>
<rect x="1688.500" y="474.500" width="11" height="11" rx="2" fill="#303030" stroke="#707070"/><path d="M1690.500 477.500h7M1690.500 480h7M1690.500 482.500h7" stroke="#808080"/>
<rect x="1709" y="476" width="70" height="7" fill="#ff3333"/>

<!-- ticks -->
<g class="tk">
<g class="gy"><text x="1617" y="506">14:56</text><text x="1617" y="740">14:57</text><text x="1617" y="758">15:00</text><text x="1617" y="776">15:05</text><text x="1617" y="830">15:06</text><text x="1617" y="848">15:08</text><text x="1617" y="920">15:09</text><text x="1617" y="938">15:10</text><text x="1617" y="956">15:12</text><text x="1617" y="974">15:14</text></g>
<g class="rd" text-anchor="end">
<text x="1753" y="506">40.22</text><text x="1753" y="524">40.21</text><text x="1753" y="542">40.21</text><text x="1753" y="560">40.22</text><text x="1753" y="578">40.22</text><text x="1753" y="596">40.23</text><text x="1753" y="614">40.24</text><text x="1753" y="632">40.23</text><text x="1753" y="650">40.23</text><text x="1753" y="668">40.25</text><text x="1753" y="686">40.24</text><text x="1753" y="704">40.24</text><text x="1753" y="722">40.25</text><text x="1753" y="740">40.25</text><text x="1753" y="758">40.25</text><text x="1753" y="776">40.25</text><text x="1753" y="794">40.25</text><text x="1753" y="812">40.25</text><text x="1753" y="830">40.25</text><text x="1753" y="848">40.25</text><text x="1753" y="866">40.25</text><text x="1753" y="884">40.25</text><text x="1753" y="902">40.25</text><text x="1753" y="920">40.25</text><text x="1753" y="938">40.25</text><text x="1753" y="956">40.25</text><text x="1753" y="974">40.25</text>
</g>
<g class="yl" text-anchor="end">
<text x="1834" y="542">480</text><text x="1834" y="560">334</text><text x="1834" y="578">411</text><text x="1834" y="596">424</text><text x="1834" y="614">470</text><text x="1834" y="632">479</text><text x="1834" y="650">374</text><text x="1834" y="686">475</text><text x="1834" y="704">418</text><text x="1834" y="740">383</text><text x="1834" y="776">1</text><text x="1834" y="794">6</text><text x="1834" y="812">6</text><text x="1834" y="830">10</text><text x="1834" y="848">1</text><text x="1834" y="866">1</text><text x="1834" y="884">2</text><text x="1834" y="902">5</text><text x="1834" y="920">4</text><text x="1834" y="938">5</text><text x="1834" y="956">7</text><text x="1834" y="974">2</text>
</g>
<g class="mg" text-anchor="end">
<text x="1834" y="506">554</text><text x="1834" y="524">767</text><text x="1834" y="668">532</text><text x="1833" y="722">1881</text><text x="1834" y="758">17727</text>
</g>
<g class="rd" text-anchor="middle"><text x="1856" y="506">B</text><text x="1856" y="542">B</text><text x="1856" y="578">B</text><text x="1856" y="596">B</text><text x="1856" y="614">B</text><text x="1856" y="668">B</text><text x="1856" y="722">B</text><text x="1856" y="740">B</text></g>
<g class="gn" text-anchor="middle"><text x="1856" y="632">S</text><text x="1856" y="650">S</text><text x="1856" y="686">S</text><text x="1856" y="704">S</text></g>
<g class="gy" text-anchor="middle" style="font-weight:normal"><text x="1857" y="776">P</text><text x="1857" y="794">P</text><text x="1857" y="812">P</text><text x="1857" y="830">P</text><text x="1857" y="848">P</text><text x="1857" y="866">P</text><text x="1857" y="884">P</text><text x="1857" y="902">P</text><text x="1857" y="920">P</text><text x="1857" y="938">P</text><text x="1857" y="956">P</text><text x="1857" y="974">P</text></g>
<g class="dg" text-anchor="end">
<text x="1892" y="506">112</text><text x="1892" y="524">155</text><text x="1892" y="542">80</text><text x="1892" y="560">80</text><text x="1892" y="578">80</text><text x="1892" y="596">92</text><text x="1892" y="614">64</text><text x="1892" y="632">79</text><text x="1892" y="650">74</text><text x="1892" y="668">79</text><text x="1892" y="686">50</text><text x="1892" y="704">48</text><text x="1893" y="722">158</text><text x="1892" y="740">80</text><text x="1892" y="758">2731</text>
<text x="1892" y="776">1</text><text x="1892" y="794">2</text><text x="1892" y="812">4</text><text x="1892" y="830">1</text><text x="1892" y="848">1</text><text x="1892" y="866">1</text><text x="1892" y="884">2</text><text x="1892" y="902">4</text><text x="1892" y="920">2</text><text x="1892" y="938">1</text><text x="1892" y="956">1</text><text x="1892" y="974">1</text>
</g>
</g>
<path d="M1615 726.500H1896M1615 744.500H1896M1615 762.500H1896M1615 816.500H1896M1615 834.500H1896M1615 906.500H1896M1615 924.500H1896M1615 942.500H1896M1615 960.500H1896" stroke="#b00000" stroke-dasharray="1 2" fill="none"/>

<!-- side toolbar -->
<rect x="1896" y="30" width="24" height="1020" fill="#f0f0f0"/>
<rect x="1896" y="30" width="1" height="1020" fill="#a0a0a0"/>
<g fill="#fff" stroke="#1e80e0" stroke-width="1.200">
<path d="M1900 42l7-6v3h7v6h-7v3z"/>
<path d="M1908 57l6 7h-3v7h-6v-7h-3z"/>
<path d="M1905 81h6v7h3l-6 7-6-7h3z"/>
<rect x="1901" y="104" width="14" height="14"/><rect x="1901" y="126" width="14" height="14"/><rect x="1901" y="149" width="14" height="14"/><rect x="1901" y="172" width="14" height="15"/><rect x="1903" y="195" width="12" height="9"/><rect x="1901" y="197" width="12" height="10"/><rect x="1901" y="220" width="14" height="14"/><rect x="1901" y="243" width="14" height="14"/><rect x="1901" y="266" width="14" height="14"/><rect x="1901" y="289" width="14" height="14"/><rect x="1901" y="311" width="14" height="14"/><rect x="1901" y="334" width="14" height="14"/><rect x="1901" y="365" width="14" height="14"/><rect x="1901" y="488" width="14" height="14"/><rect x="1901" y="511" width="14" height="14"/>
</g>
<path d="M1903 107h10M1903 110h6M1903 113h7" stroke="#d02020"/><path d="M1903 129h3M1907 129h3M1911 129h3M1903 132h3M1907 132h3M1911 132h3M1903 135h3M1907 135h3M1911 135h3M1903 138h3M1907 138h3M1911 138h3" stroke="#2040c0"/><path d="M1902 160l4-3 3 1 5-5" stroke="#e02020" fill="none"/>
<path d="M1904 176v8M1908 174v9M1912 176v7" stroke="#20a020" stroke-width="2.500"/><path d="M1908 174v4M1912 175v4" stroke="#d02020" stroke-width="2.500"/>
<text x="1908" y="231" font-size="10" fill="#1040c0" text-anchor="middle" font-weight="bold">F10</text>
<path d="M1905 247h4v3h-4zM1910 251h4v3h-4z" fill="#f0c040"/>
<path d="M1904 269h8v9h-8zM1905 272h6M1905 275h6" fill="none" stroke="#f08020"/>
<text x="1908" y="300" font-size="10" fill="#1040c0" text-anchor="middle" font-weight="bold">F12</text>
<text x="1908" y="322" font-size="10" fill="#102060" text-anchor="middle" font-style="italic">f(x)</text>
<circle cx="1908" cy="341" r="4" fill="none" stroke="#1060d0" stroke-width="1.400"/>
<path d="M1899 356.500h18M1899 480.500h18" stroke="#a0a0a0"/>
<path d="M1902 372l3-2 2 2 3-2 3 2M1902 375l3-2 2 2 3-2 3 2" stroke="#c02060" fill="none"/>
<text x="1908" y="399" font-size="10" fill="#1030c0" text-anchor="middle" font-weight="bold">RSI</text>
<text x="1908" y="424" font-size="15" fill="#c02020" text-anchor="middle" font-weight="bold">S</text>
<path d="M1908 434l3 3.500h-2v2.500h2.500v-2l3.500 3-3.500 3v-2H1909v2.500h2l-3 3.500-3-3.500h2V443h-2.500v2l-3.500-3 3.500-3v2H1907v-2.500h-2z" fill="#1050c0"/>
<path d="M1902 470l2-5 8-8 3 3-8 8z" fill="#e8a030"/><path d="M1902 470l1-3 2 2z" fill="#303030"/>
<text x="1908" y="499" font-size="10" fill="#1040c0" text-anchor="middle" font-weight="bold">F5</text>
<path d="M1904 518a4 4 0 0 1 7-2M1912 518a4 4 0 0 1-7 2" stroke="#30a040" stroke-width="1.800" fill="none"/>
<g class="sd">
<text x="1907" y="546">1</text><text x="1907" y="569">5</text><text x="1907" y="592">15</text><text x="1907" y="615">30</text><text x="1907" y="638">60</text>
</g>
<rect x="1897" y="645" width="22" height="23" fill="#fafafa" stroke="#a8a8a8"/>
<g class="sd" style="font-family:'Noto Sans CJK SC'">
<text x="1908" y="662" style="font-size:14px">日</text><text x="1908" y="685">周</text><text x="1908" y="707">月</text><text x="1908" y="730">N</text><text x="1908" y="753">多</text><text x="1908" y="776">季</text><text x="1908" y="799">年</text>
</g>
</svg>
</body>
</html>
